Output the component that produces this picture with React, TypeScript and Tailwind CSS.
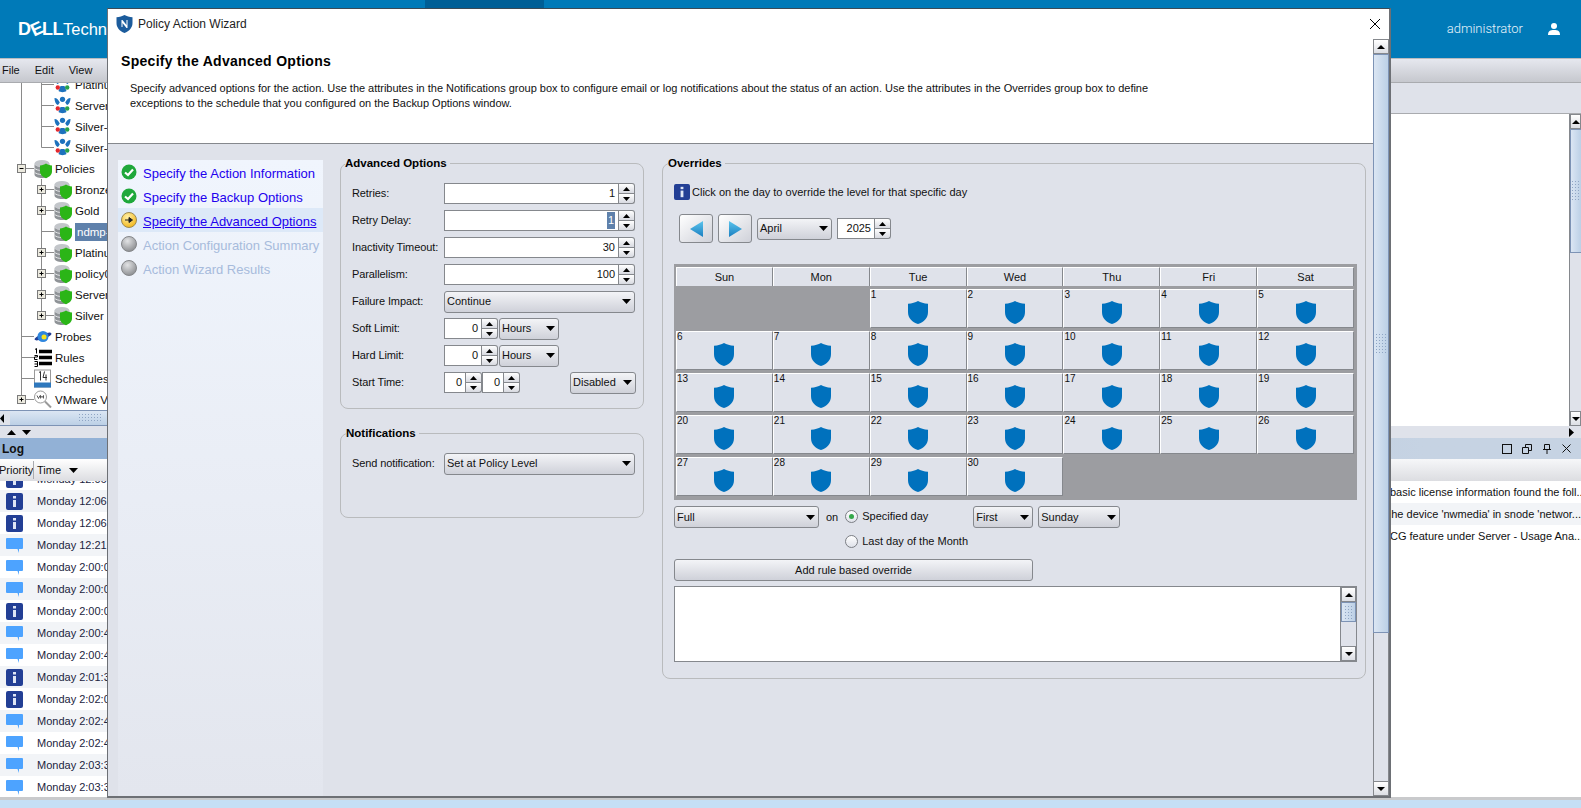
import React from 'react';

const Caret = ({ up = false, w = 9, h = 5 }: { up?: boolean; w?: number; h?: number }) => (
  <svg width={w} height={h} viewBox="0 0 9 5" preserveAspectRatio="none" className="shrink-0">
    <path d={up ? 'M4.5 0L9 5H0z' : 'M0 0h9L4.5 5z'} fill="#000" />
  </svg>
);

const DbIcon = () => (
  <g>
    <ellipse cx="8" cy="4" rx="7.500" ry="3.500" fill="#c3c6ca" />
    <path d="M.5 4v11c0 2 3.500 3.500 7.500 3.500s7.500-1.500 7.500-3.500V4c0 2-3.500 3.500-7.500 3.500S.5 6 .5 4z" fill="#8f9397" />
    <path d="M.5 8.500c1 1.600 4 2.500 7.500 2.500s6.500-.9 7.500-2.500M.5 12.500c1 1.600 4 2.500 7.500 2.500s6.500-.9 7.500-2.500" stroke="#e8e9ea" strokeWidth="1" fill="none" />
    <path d="M12 4c1.500 1 3.500 1.800 6 2v6c0 3.400-2.800 5.400-6 6.700-3.200-1.300-6-3.300-6-6.700V6c2.500-.2 4.500-1 6-2z" fill="#2bb517" />
  </g>
);

const ActionIcon = () => (
  <g>
    <circle cx="8.500" cy="2.800" r="2.600" fill="#1d72bd" />
    <path d="M.5 1.500c2.500 0 4 2 5.300 4.500L4 8.500C2 8 .5 5 .5 1.500zM16.500 1.500c-2.500 0-4 2-5.300 4.500L13 8.500c2-.5 3.500-3.500 3.500-7z" fill="#1d72bd" />
    <path d="M6.500 10.500h4l2 5c-2 1.500-6 1.500-8 0z" fill="#1d72bd" />
    <circle cx="3.800" cy="12" r="2.200" fill="#e3282d" />
    <circle cx="13.200" cy="12" r="2.200" fill="#27a34a" />
  </g>
);

const TreeRow = ({ level, label, kind, last, expand, selected }: {
  level: 1 | 2;
  label: string;
  kind: 'db' | 'action' | 'probe' | 'rules' | 'cal' | 'vm';
  last?: boolean;
  expand?: 'plus' | 'minus';
  selected?: boolean;
}) => {
  const vx = level === 1 ? 21.5 : 41.5;
  const ix = level === 1 ? 34 : 54;
  return (
    <div className="flex h-[21px] items-center">
      <svg width={ix + 19} height="21" viewBox={`0 0 ${ix + 19} 21`} className="shrink-0">
        {level === 2 && <path d="M21.500 0v21" stroke="#8a8a8a" />}
        <path d={`M${vx} 0v${last ? 10.5 : 21}M${vx} 10.500H${ix}`} stroke="#8a8a8a" fill="none" />
        {expand && (
          <g>
            <rect x={vx - 4} y="6.500" width="8" height="8" fill="#eceadf" stroke="#7b7b7b" />
            <path d={`M${vx - 2} 10.500h4${expand === 'plus' ? `M${vx} 8.500v4` : ''}`} stroke="#000" />
          </g>
        )}
        <g transform={`translate(${ix} 1.500)`}>
          {kind === 'db' && <DbIcon />}
          {kind === 'action' && <ActionIcon />}
          {kind === 'probe' && (
            <g>
              <ellipse cx="9" cy="9" rx="9" ry="2.500" fill="#233f95" transform="rotate(-20 9 9)" />
              <circle cx="9" cy="9" r="5.500" fill="#2e86de" />
              <circle cx="10" cy="9.500" r="2.500" fill="#f6e21c" />
            </g>
          )}
          {kind === 'rules' && (
            <g>
              <path d="M5 3h13M5 9h13M5 15h13" stroke="#000" strokeWidth="3.500" />
              <path d="M1 1l1.500-1v5M.5 7h3v1.500h-3V11h3M.5 13h3v5h-3M.5 15.500h3" stroke="#000" fill="none" />
            </g>
          )}
          {kind === 'cal' && (
            <g>
              <rect x=".5" y=".5" width="16" height="17" fill="#fff" stroke="#999" />
              <rect x="0" y="13" width="17" height="5" fill="#2e78bd" />
              <path d="M5 3L6.500 2v9M10.500 2L9 8h4M12 5v6" stroke="#333" fill="none" />
            </g>
          )}
          {kind === 'vm' && (
            <g>
              <circle cx="6.500" cy="6.500" r="6" fill="#fff" stroke="#9a9a9a" />
              <path d="M11 11l6 6" stroke="#9a9a9a" strokeWidth="2" />
              <path d="M3 5l1.500 3L6 5M6.500 8V5l1.500 2 1.500-2v3" stroke="#333" fill="none" strokeWidth=".8" />
            </g>
          )}
        </g>
      </svg>
      <span className={`ml-[2px] whitespace-nowrap text-[11.500px] leading-[18px] ${selected ? 'flex-1 bg-[#5f81ab] pl-[2px] text-white' : 'text-[#111]'}`}>{label}</span>
    </div>
  );
};

const MsgIcon = () => (
  <svg width="17" height="15" viewBox="0 0 17 15">
    <path d="M1 0h15a1 1 0 011 1v9a1 1 0 01-1 1h-3v4l-1.500-4H1a1 1 0 01-1-1V1a1 1 0 011-1z" fill="#4da3ff" />
  </svg>
);

const InfoIcon = ({ w = 17, h = 17 }: { w?: number; h?: number }) => (
  <svg width={w} height={h} viewBox="0 0 17 17">
    <rect width="17" height="17" rx="2" fill="#233f95" />
    <rect x="7" y="3" width="3" height="2.500" fill="#dfe6f5" />
    <rect x="7" y="7" width="3" height="7" fill="#dfe6f5" />
  </svg>
);

const logRows: [string, string][] = [
  ['i', 'Monday 12:06:'],
  ['i', 'Monday 12:06:'],
  ['m', 'Monday 12:21:'],
  ['m', 'Monday 2:00:0'],
  ['m', 'Monday 2:00:0'],
  ['i', 'Monday 2:00:0'],
  ['m', 'Monday 2:00:4'],
  ['m', 'Monday 2:00:4'],
  ['i', 'Monday 2:01:3'],
  ['i', 'Monday 2:02:0'],
  ['m', 'Monday 2:02:4'],
  ['m', 'Monday 2:02:4'],
  ['m', 'Monday 2:03:3'],
  ['m', 'Monday 2:03:3'],
];

const ScrollBtn = ({ up }: { up?: boolean }) => (
  <div className="flex h-[15px] w-full shrink-0 items-center justify-center border border-[#85888d] bg-gradient-to-b from-white to-[#dcdee4]">
    <Caret up={up} w={8} h={4} />
  </div>
);

const Grip = () => (
  <div className="h-[22px] w-[12px] bg-[radial-gradient(#8fa5c4_1px,transparent_1px)] bg-[length:3px_3px]" />
);

const Spin = ({ value, input, selected }: { value: string; input: number; selected?: boolean }) => (
  <div className="flex h-[21px] shrink-0">
    <div className="flex items-center justify-end border border-[#85888d] bg-white pr-[3px] text-[11px]" style={{ width: input }}>
      {selected ? <span className="bg-[#5f81ab] px-[1px] text-white">{value}</span> : value}
    </div>
    <div className="flex w-[16px] flex-col">
      <div className="flex h-[11px] items-center justify-center rounded-tr-[3px] border border-l-0 border-[#85888d] bg-gradient-to-b from-white to-[#d8dae1]">
        <Caret up w={7} h={4} />
      </div>
      <div className="flex h-[10px] items-center justify-center rounded-br-[3px] border border-l-0 border-t-0 border-[#85888d] bg-gradient-to-b from-white to-[#d8dae1]">
        <Caret w={7} h={4} />
      </div>
    </div>
  </div>
);

const Select = ({ value, width, h = 22 }: { value: string; width: number; h?: number }) => (
  <div className="flex shrink-0 items-center justify-between rounded-[3px] border border-[#85888d] bg-gradient-to-b from-[#f3f4f7] to-[#cfd1d9] pl-[2px] pr-[3px] text-[11px]" style={{ width, height: h }}>
    <span>{value}</span>
    <Caret />
  </div>
);

const FormRow = ({ label, children }: { label: string; children: React.ReactNode }) => (
  <div className="flex h-[21px] items-center">
    <span className="w-[92px] shrink-0 whitespace-nowrap text-[11px] tracking-[-0.1px]">{label}</span>
    {children}
  </div>
);

const NavItem = ({ state, label }: { state: 'done' | 'current' | 'todo'; label: string }) => (
  <div className={`flex h-[24px] items-center pl-[3px] ${state === 'current' ? 'bg-[#dde9f8]' : ''}`}>
    <svg width="16" height="16" viewBox="0 0 16 16" className="shrink-0">
      <defs>
        <radialGradient id="navGray" cx="40%" cy="30%" r="70%">
          <stop offset="0%" stopColor="#e2e3e5" />
          <stop offset="100%" stopColor="#8e9093" />
        </radialGradient>
        <radialGradient id="navGold" cx="40%" cy="30%" r="70%">
          <stop offset="0%" stopColor="#fff0a8" />
          <stop offset="100%" stopColor="#f2b81e" />
        </radialGradient>
      </defs>
      {state === 'done' && (
        <g>
          <circle cx="8" cy="8" r="7.500" fill="#1fa83b" />
          <path d="M4 8.500l3 2.500 5-5.500" stroke="#fff" strokeWidth="2.200" fill="none" />
        </g>
      )}
      {state === 'current' && (
        <g>
          <circle cx="8" cy="8" r="7.500" fill="url(#navGold)" stroke="#9b8a55" />
          <path d="M4 8h5M8 5.500L11.500 8 8 10.500z" stroke="#222" fill="#222" />
        </g>
      )}
      {state === 'todo' && <circle cx="8" cy="8" r="7.500" fill="url(#navGray)" stroke="#85878a" />}
    </svg>
    <span className={`ml-[6px] mt-[3px] whitespace-nowrap text-[13px] ${state === 'todo' ? 'text-[#a7bbdc]' : 'text-[#2200ee]'} ${state === 'current' ? 'underline' : ''}`}>{label}</span>
  </div>
);

const Shield = () => (
  <svg width="20" height="23" viewBox="0 0 20 23" className="self-center">
    <path d="M10 0c2.500 1.500 6 2.500 10 2.800V11c0 6-4 10-10 12C4 21 0 17 0 11V2.800C4 2.500 7.500 1.500 10 0z" fill="#0071bd" />
  </svg>
);

const days = ['Sun', 'Mon', 'Tue', 'Wed', 'Thu', 'Fri', 'Sat'];
const cells: (number | null)[] = [null, null, ...Array.from({ length: 30 }, (_, i) => i + 1), null, null, null];

const Calendar = () => (
  <div className="mt-[21px] w-[683px] bg-[#9c9da1] pb-[4px] pl-[2px] pr-[3px] pt-[3px]">
    <div className="grid grid-cols-7 gap-y-[3px]">
      {days.map((d) => (
        <div key={d} className="flex h-[19px] items-center justify-center border-l border-t border-r border-white border-r-[#85888d] bg-[#dfe2ea] text-[11px]">
          {d}
        </div>
      ))}
      {cells.map((n, i) =>
        n === null ? (
          <div key={i} className="h-[39px]" />
        ) : (
          <div key={i} className="flex h-[39px] flex-col border-l border-t border-r border-b border-white border-r-[#85888d] border-b-[#85888d] bg-[#dfe2ea]">
            <span className="h-[11px] text-[10px] leading-[9px]">{n}</span>
            <Shield />
          </div>
        ),
      )}
    </div>
  </div>
);

const Radio = ({ label, on }: { label: string; on?: boolean }) => (
  <div className="flex h-[25px] items-center">
    <div className="flex h-[13px] w-[13px] items-center justify-center rounded-full border border-[#7c7f85] bg-gradient-to-b from-white to-[#dfe2ea]">
      {on && <div className="h-[5px] w-[5px] rounded-full bg-[#35a84a]" />}
    </div>
    <span className="ml-[4px] text-[11px]">{label}</span>
  </div>
);

const Wizard = () => (
  <div className="absolute left-[107px] top-[8px] z-20 flex h-[790px] w-[1284px] flex-col border border-b-2 border-r-2 border-[#6d7075] border-t-[#3c4a55] bg-white">
    <div className="flex h-[30px] shrink-0 items-center pl-[8px] pr-[8px]">
      <svg width="17" height="18" viewBox="0 0 17 18" className="shrink-0">
        <path d="M8.500 0c2 1.200 5 2 8 2.200V8c0 4.500-3 8-8 10-5-2-8-5.500-8-10V2.200c3-.2 6-1 8-2.200z" fill="#1c5c9c" />
        <path d="M5.500 12V5h1l4 5V5h1v8h-1l-4-5v4z" fill="#fff" />
      </svg>
      <span className="ml-[5px] text-[12px] text-[#222]">Policy Action Wizard</span>
      <svg width="12" height="12" viewBox="0 0 12 12" className="ml-auto">
        <path d="M1 1l10 10M11 1L1 11" stroke="#000" strokeWidth="1" />
      </svg>
    </div>
    <div className="flex min-h-0 flex-1">
      <div className="flex min-w-0 flex-1 flex-col">
        <div className="h-[105px] shrink-0 border-b border-[#85888d] pl-[13px]">
          <h1 className="mt-[12px] text-[14px] font-bold leading-[20px] tracking-[0.3px] text-black">Specify the Advanced Options</h1>
          <p className="ml-[9px] mt-[10px] w-[1040px] text-[11px] leading-[15px] tracking-[-0.02px] text-[#111]">
            Specify advanced options for the action. Use the attributes in the Notifications group box to configure email or log notifications about the status of an action. Use the attributes in the Overrides group box to define exceptions to the schedule that you configured on the Backup Options window.
          </p>
        </div>
        <div className="flex min-h-0 flex-1 bg-[#dfe2ea] text-[#111]">
          <div className="ml-[10px] mt-[16px] w-[205px] shrink-0 bg-gradient-to-b from-[#f0f5fd] to-[#e3e6ee]">
            <NavItem state="done" label="Specify the Action Information" />
            <NavItem state="done" label="Specify the Backup Options" />
            <NavItem state="current" label="Specify the Advanced Options" />
            <NavItem state="todo" label="Action Configuration Summary" />
            <NavItem state="todo" label="Action Wizard Results" />
          </div>
          <div className="ml-[17px] mt-[12px] flex w-[304px] shrink-0 flex-col">
            <fieldset className="h-[253px] rounded-[8px] border border-[#b9bbbd] pl-[11px] pr-[7px]">
              <legend className="ml-[-7px] pr-[3px] text-[11.500px] font-bold leading-[14px] text-black">Advanced Options</legend>
              <div className="mt-[13px] flex flex-col gap-[6px]">
                <FormRow label="Retries:"><Spin value="1" input={175} /></FormRow>
                <FormRow label="Retry Delay:"><Spin value="1" input={175} selected /></FormRow>
                <FormRow label="Inactivity Timeout:"><Spin value="30" input={175} /></FormRow>
                <FormRow label="Parallelism:"><Spin value="100" input={175} /></FormRow>
                <FormRow label="Failure Impact:"><Select value="Continue" width={191} /></FormRow>
                <FormRow label="Soft Limit:"><Spin value="0" input={38} /><div className="ml-[1px]"><Select value="Hours" width={60} /></div></FormRow>
                <FormRow label="Hard Limit:"><Spin value="0" input={38} /><div className="ml-[1px]"><Select value="Hours" width={60} /></div></FormRow>
                <FormRow label="Start Time:">
                  <Spin value="0" input={22} />
                  <Spin value="0" input={22} />
                  <div className="ml-auto"><Select value="Disabled" width={66} /></div>
                </FormRow>
              </div>
            </fieldset>
            <fieldset className="mt-[17px] h-[92px] rounded-[8px] border border-[#b9bbbd] pl-[11px] pr-[7px]">
              <legend className="ml-[-6px] pr-[3px] text-[11.500px] font-bold leading-[14px] text-black">Notifications</legend>
              <div className="mt-[13px]">
                <FormRow label="Send notification:"><Select value="Set at Policy Level" width={191} /></FormRow>
              </div>
            </fieldset>
          </div>
          <fieldset className="ml-[18px] mt-[12px] h-[523px] w-[704px] shrink-0 rounded-[8px] border border-[#b9bbbd] pl-[11px]">
            <legend className="ml-[-6px] pr-[3px] text-[11.500px] font-bold leading-[14px] text-black">Overrides</legend>
            <div className="mt-[14px] flex h-[16px] items-center">
              <InfoIcon w={16} h={16} />
              <span className="ml-[2px] text-[11px]">Click on the day to override the level for that specific day</span>
            </div>
            <div className="ml-[5px] mt-[14px] flex items-center">
              {['M13 0v16L0 8z', 'M0 0v16l13-8z'].map((d, i) => (
                <div key={d} className={`flex h-[29px] w-[34px] items-center justify-center rounded-[3px] border border-[#85888d] bg-gradient-to-br from-white to-[#cfd1d9] ${i === 1 ? 'ml-[5px]' : ''}`}>
                  <svg width="13" height="16" viewBox="0 0 13 16">
                    <defs>
                      <linearGradient id="arrowBlue" x1="0" y1="0" x2="0" y2="1">
                        <stop offset="0%" stopColor="#5cc4ec" />
                        <stop offset="100%" stopColor="#1a7fc1" />
                      </linearGradient>
                    </defs>
                    <path d={d} fill="url(#arrowBlue)" />
                  </svg>
                </div>
              ))}
              <div className="ml-[5px]"><Select value="April" width={75} /></div>
              <div className="ml-[5px]"><Spin value="2025" input={38} /></div>
            </div>
            <Calendar />
            <div className="mt-[6px] flex items-start">
              <Select value="Full" width={145} />
              <span className="ml-[7px] mt-[3px] text-[11px]">on</span>
              <div className="ml-[7px] -mt-[2px] flex w-[128px] flex-col">
                <Radio label="Specified day" on />
                <Radio label="Last day of the Month" />
              </div>
              <Select value="First" width={60} />
              <div className="ml-[5px]"><Select value="Sunday" width={82} /></div>
            </div>
            <div className="mt-[5px] flex h-[22px] w-[359px] items-center justify-center rounded-[3px] border border-[#85888d] bg-gradient-to-b from-[#f3f4f7] to-[#cfd1d9] text-[11px]">
              Add rule based override
            </div>
            <div className="mt-[5px] flex h-[76px] w-[683px] border border-[#85888d] bg-white">
              <div className="flex-1" />
              <div className="flex w-[16px] flex-col border-l border-[#85888d] bg-[#dfe2ea]">
                <ScrollBtn up />
                <div className="flex h-[20px] items-center justify-center border border-[#7d93b5] bg-gradient-to-r from-[#dbe6f3] to-[#bcd0e6]"><div className="h-[14px] w-[10px] bg-[radial-gradient(#8fa5c4_1px,transparent_1px)] bg-[length:3px_3px]" /></div>
                <div className="flex-1" />
                <ScrollBtn />
              </div>
            </div>
          </fieldset>
        </div>
      </div>
      <div className="flex w-[16px] shrink-0 flex-col bg-[#dfe2ea]">
        <ScrollBtn up />
        <div className="flex h-[579px] items-center justify-center border border-[#7d93b5] bg-gradient-to-r from-[#dbe6f3] to-[#bcd0e6]"><Grip /></div>
        <div className="flex-1 border-x border-[#85888d]" />
        <ScrollBtn />
      </div>
    </div>
  </div>
);

export default function App() {
  return (
    <div className="relative flex h-[808px] w-[1581px] flex-col overflow-hidden bg-white font-['Liberation_Sans',sans-serif] text-[#111]">
      <header className="relative flex h-[58px] shrink-0 items-center bg-[#007ab8] pl-[18px] pr-[21px] text-white">
        <div className="absolute left-[425px] top-0 h-[8px] w-[119px] bg-[#005f96]" />
        <span className="flex w-[89px] items-baseline overflow-hidden whitespace-nowrap leading-none">
          <span className="text-[18px] font-bold tracking-[-0.5px]">D<span className="inline-block -rotate-[25deg]">E</span>LL</span>
          <span className="text-[16.500px] font-light">Techn</span>
        </span>
        <span className="ml-auto font-['Roboto',sans-serif] text-[13px] font-light text-[#e6f3fa]">administrator</span>
        <svg width="12" height="12" viewBox="0 0 12 12" className="ml-[25px]">
          <circle cx="6" cy="3" r="3" fill="#fff" />
          <path d="M0 12c0-4 2-5 6-5s6 1 6 5z" fill="#fff" />
        </svg>
      </header>
      <nav className="flex h-[25px] shrink-0 items-center gap-[15px] border-b border-t border-b-[#a9abaf] border-t-[#b9bbbf] bg-gradient-to-b from-[#e6e8ef] to-[#c6c8ce] pl-[2px] text-[11px]">
        <span>File</span>
        <span>Edit</span>
        <span>View</span>
      </nav>
      <div className="flex h-[355px] shrink-0">
        <div className="flex w-[107px] shrink-0 flex-col overflow-hidden">
          <div className="min-h-0 flex-1 overflow-hidden">
            <div className="-mt-[9px]">
              <TreeRow level={2} kind="action" label="Platinu" />
              <TreeRow level={2} kind="action" label="Server" />
              <TreeRow level={2} kind="action" label="Silver-" />
              <TreeRow level={2} kind="action" label="Silver-" last />
              <TreeRow level={1} kind="db" label="Policies" expand="minus" />
              <TreeRow level={2} kind="db" label="Bronze" expand="plus" />
              <TreeRow level={2} kind="db" label="Gold" expand="plus" />
              <TreeRow level={2} kind="db" label="ndmp-l" selected />
              <TreeRow level={2} kind="db" label="Platinu" expand="plus" />
              <TreeRow level={2} kind="db" label="policy0" expand="plus" />
              <TreeRow level={2} kind="db" label="Server" expand="plus" />
              <TreeRow level={2} kind="db" label="Silver" expand="plus" last />
              <TreeRow level={1} kind="probe" label="Probes" />
              <TreeRow level={1} kind="rules" label="Rules" />
              <TreeRow level={1} kind="cal" label="Schedules" />
              <TreeRow level={1} kind="vm" label="VMware V" expand="plus" last />
            </div>
          </div>
          <div className="flex h-[16px] shrink-0 items-center border-b border-t border-[#7d93b5] bg-[#dfe2ea]">
            <svg width="4" height="9" viewBox="0 0 4 9" className="shrink-0"><path d="M4 0v9L0 4.500z" fill="#000" /></svg>
            <div className="ml-[6px] flex h-full flex-1 items-center bg-gradient-to-b from-[#dbe6f3] to-[#bcd0e6] pl-[68px]">
              <div className="h-[10px] w-[24px] bg-[radial-gradient(#8fa5c4_1px,transparent_1px)] bg-[length:3px_3px]" />
            </div>
          </div>
          <div className="flex h-[12px] shrink-0 items-center gap-[6px] bg-[#dfe2ea] pl-[7px]">
            <Caret up />
            <Caret />
          </div>
        </div>
        <div className="flex-1" />
        <div className="flex w-[191px] shrink-0 flex-col">
          <div className="h-[31px] shrink-0 border-b border-[#a9abaf] bg-[#dfe2ea]" />
          <div className="flex min-h-0 flex-1 justify-end">
            <div className="flex w-[12px] flex-col overflow-hidden border-l border-[#85888d]">
              <ScrollBtn up />
              <div className="flex h-[124px] shrink-0 items-start border-y border-l border-[#7d93b5] bg-gradient-to-r from-[#dbe6f3] to-[#bcd0e6] pt-[50px]"><Grip /></div>
              <div className="flex-1 bg-[#dfe2ea]" />
              <ScrollBtn />
            </div>
          </div>
          <div className="flex h-[12px] shrink-0 items-center justify-end bg-[#dfe2ea] pr-[7px]">
            <svg width="5" height="9" viewBox="0 0 5 9"><path d="M0 0l5 4.500L0 9z" fill="#000" /></svg>
          </div>
        </div>
      </div>
      <div className="flex h-[21px] shrink-0 items-center bg-gradient-to-r from-[#92b1d6] from-10% to-[#c6d3e3] to-90% pr-[10px]">
        <span className="ml-[2px] mt-[1px] text-[12px] font-bold text-[#111]">Log</span>
        <div className="ml-auto flex items-center gap-[10px]">
          <svg width="10" height="10" viewBox="0 0 10 10"><rect x=".5" y=".5" width="9" height="9" fill="none" stroke="#111" /></svg>
          <svg width="10" height="10" viewBox="0 0 10 10"><path d="M.5 3.500h6v6h-6zM3.500 3V.5h6v6H7" fill="none" stroke="#111" /></svg>
          <svg width="10" height="10" viewBox="0 0 10 10"><path d="M2.500.5h5v5h-5zM1 5.500h8M5 5.500V10" fill="none" stroke="#111" /></svg>
          <svg width="9" height="9" viewBox="0 0 9 9"><path d="M.5.5l8 8M8.500.5l-8 8" stroke="#111" /></svg>
        </div>
      </div>
      <div className="flex min-h-0 flex-1">
        <div className="flex w-[107px] shrink-0 flex-col overflow-hidden">
          <div className="flex h-[22px] shrink-0 items-center bg-gradient-to-b from-white to-[#dcdde1] text-[11px]">
            <span className="-ml-[1px] w-[34px] whitespace-nowrap">Priority</span>
            <span className="h-[18px] border-l border-[#a9abaf] pl-[3px] leading-[18px]">Time</span>
            <span className="ml-[8px]"><Caret /></span>
          </div>
          <div className="h-[9px] shrink-0 overflow-hidden">
            <div className="-mt-[13px] flex h-[22px] items-center bg-white">
              <div className="ml-[6px] flex w-[31px] shrink-0"><InfoIcon /></div>
              <span className="whitespace-nowrap text-[11px] text-[#1b2440]">Monday 12:06:</span>
            </div>
          </div>
          {logRows.map(([k, t], i) => (
            <div key={i} className={`flex h-[22px] shrink-0 items-center ${i % 2 === 1 ? 'bg-white' : 'bg-[#f2f4f7]'}`}>
              <div className="ml-[6px] flex w-[31px] shrink-0">{k === 'i' ? <InfoIcon /> : <MsgIcon />}</div>
              <span className="whitespace-nowrap text-[11px] text-[#1b2440]">{t}</span>
            </div>
          ))}
        </div>
        <div className="flex-1" />
        <div className="flex w-[191px] shrink-0 flex-col overflow-hidden">
          <div className="h-[22px] shrink-0 bg-gradient-to-b from-[#f6f7f9] to-[#dcdde1]" />
          {['basic license information found the foll...', "he device 'nwmedia' in snode 'networ...", 'CG feature under Server - Usage Ana...'].map((t, i) => (
            <div key={t} className={`h-[22px] whitespace-nowrap text-right text-[11px] leading-[22px] ${i === 1 ? 'bg-[#f2f4f7]' : 'bg-white'}`}>{t}</div>
          ))}
        </div>
      </div>
      <div className="h-[11px] shrink-0 border-t-[3px] border-[#c9cacc] bg-[#c5dff5]" />
      <Wizard />
    </div>
  );
}
